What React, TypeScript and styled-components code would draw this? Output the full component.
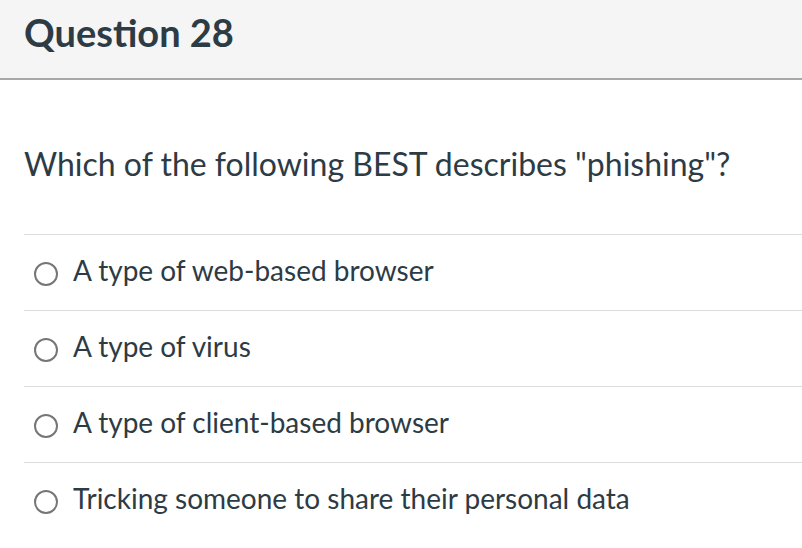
import React from "react";
import styled, { createGlobalStyle } from "styled-components";

const Global = createGlobalStyle`
    body{
        margin:0;
        background:#fff;
        font-family:Lato, "Liberation Sans", sans-serif;
        color:#2d3b45;
    }
`

const Header = styled.header`
    height:80px;
    box-sizing:border-box;
    background:#f5f5f5;
    border-bottom:2px solid #a8a8a8;
    padding:13px 24px 0;
    >h2{
        margin:0;
        font-size:38px;
        line-height:38px;
        font-weight:700;
    }
`

const Body = styled.section`
    padding:0 0 0 24px;
`

const Prompt = styled.p`
    margin:0;
    padding:65px 0 0;
    height:154px;
    box-sizing:border-box;
    font-size:32px;
    line-height:38px;
`

const Answers = styled.ul`
    list-style:none;
    margin:0;
    padding:0;
`

const Answer = styled.li`
    display:flex;
    align-items:center;
    height:76px;
    box-sizing:border-box;
    border-top:1px solid #dcdcdc;
    padding:2px 0 0 10px;
`

const Radio = styled.span`
    display:inline-block;
    width:24px;
    height:24px;
    box-sizing:border-box;
    border:2px solid #767676;
    border-radius:50%;
    background:#fff;
    flex-shrink:0;
`

const Label = styled.span`
    margin:0 0 7px 15px;
    font-size:28px;
    line-height:32px;
`

const options = [
    "A type of web-based browser",
    "A type of virus",
    "A type of client-based browser",
    "Tricking someone to share their personal data",
]

function App() {
    return (
        <>
            <Global />
            <Header>
                <h2>Question 28</h2>
            </Header>
            <Body>
                <Prompt>Which of the following BEST describes "phishing"?</Prompt>
                <Answers>
                    {options.map(o => (
                        <Answer key={o}>
                            <Radio />
                            <Label>{o}</Label>
                        </Answer>
                    ))}
                </Answers>
            </Body>
        </>
    )
}

export default App
